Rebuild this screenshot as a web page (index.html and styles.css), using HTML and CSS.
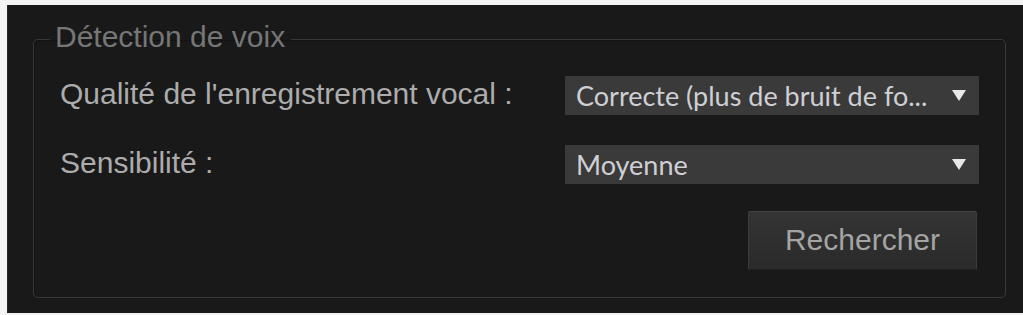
FILE: index.html
```html
<!DOCTYPE html>
<html lang="fr">
<head>
<meta charset="utf-8">
<link rel="stylesheet" href="styles.css">
</head>
<body>
<div class="panel">
  <fieldset class="group">
    <legend class="group-title">Détection de voix</legend>
    <div class="form">
      <label class="label">Qualité de l'enregistrement vocal :</label>
      <div class="select"><span class="select-text">Correcte (plus de bruit de fo...</span><span class="arrow"></span></div>
      <label class="label">Sensibilité :</label>
      <div class="select"><span class="select-text">Moyenne</span><span class="arrow"></span></div>
      <div class="actions"><button class="btn">Rechercher</button></div>
    </div>
  </fieldset>
</div>
</body>
</html>
```
FILE: styles.css
```css
html, body {
  margin: 0;
  padding: 0;
  background: #f4f4f4;
}
body {
  width: 1023px;
  height: 315px;
  overflow: hidden;
}
.panel {
  margin: 5px 0 0 7px;
  height: 308px;
  box-sizing: border-box;
  background: #191919;
  border-left: 1px solid #2a2a2a;
  padding: 16px 17px 0 25px;
}
.group {
  margin: 0;
  padding: 18px 26px 24px 26px;
  border: 1px solid #383838;
  border-radius: 5px;
  box-shadow: inset 1px 1px 0 #121212;
}
.group-title {
  margin-left: -10px;
  padding: 0 6px 5px 5px;
  font-family: "Liberation Sans", Arial, sans-serif;
  font-size: 30px;
  line-height: 32px;
  color: #767676;
}
.form {
  display: grid;
  grid-template-columns: 1fr 414px;
  grid-template-rows: 39px 39px 59px;
  row-gap: 30px;
  align-items: center;
}
.label {
  font-family: "Liberation Sans", Arial, sans-serif;
  font-size: 30px;
  color: #acacac;
  margin-top: -3px;
}
.select {
  height: 39px;
  background: #3a3a3a;
  display: flex;
  align-items: center;
  padding: 0 13px 0 11px;
}
.select-text {
  flex: 1;
  font-family: Lato, "Open Sans", sans-serif;
  font-size: 27px;
  color: #cfcfd4;
}
.arrow {
  width: 0;
  height: 0;
  border-left: 7px solid transparent;
  border-right: 7px solid transparent;
  border-top: 11px solid #e8e8e8;
}
.actions {
  grid-column: 1 / 3;
  display: flex;
  justify-content: flex-end;
  padding-right: 2px;
  margin-top: -7px;
}
.btn {
  width: 229px;
  height: 59px;
  background: linear-gradient(#343434, #2a2a2a);
  border: 1px solid #3c3c3c;
  border-top-color: #444;
  border-bottom-color: #202020;
  border-radius: 2px;
  font-family: "Liberation Sans", Arial, sans-serif;
  font-size: 30px;
  color: #a4a4a4;
  padding: 0;
}
```
